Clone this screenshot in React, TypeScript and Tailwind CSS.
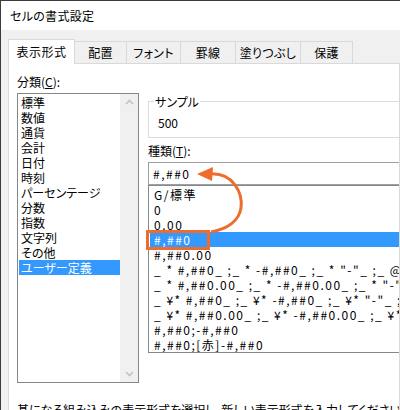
import React from "react";

const categories = ["標準", "数値", "通貨", "会計", "日付", "時刻", "パーセンテージ", "分数", "指数", "文字列", "その他", "ユーザー定義"];

const formats = [
  "G/標準",
  "0",
  "0.00",
  "#,##0",
  "#,##0.00",
  '_ * #,##0_ ;_ * -#,##0_ ;_ * "-"_ ;_ @_ ',
  '_ * #,##0.00_ ;_ * -#,##0.00_ ;_ * "-"??_ ;_ @_ ',
  '_ ¥* #,##0_ ;_ ¥* -#,##0_ ;_ ¥* "-"_ ;_ @_ ',
  '_ ¥* #,##0.00_ ;_ ¥* -#,##0.00_ ;_ ¥* "-"??_ ;_ @_ ',
  "#,##0;-#,##0",
  "#,##0;[赤]-#,##0",
];

const tabs = [
  { label: "配置", w: "w-[53px]" },
  { label: "フォント", w: "w-[55px]" },
  { label: "罫線", w: "w-[56px]" },
  { label: "塗りつぶし", w: "w-[66px]" },
  { label: "保護", w: "w-[53px]" },
];

const font = "font-['Noto_Sans_CJK_JP',sans-serif] [font-feature-settings:'palt']";

/**
 * Excel "セルの書式設定" dialog, 表示形式 tab
 */
export default function App() {
  return (
    <div className={`relative w-[400px] h-[410px] overflow-hidden bg-[#f0f0f0] border-l border-t border-[#3c3c3c] text-[12px] leading-[15px] text-black ${font}`}>
      {/* Title bar */}
      <div className="h-[29px] bg-white flex items-center pl-[9px] text-[12px] tracking-[0.3px]">セルの書式設定</div>

      {/* Tabs */}
      <div className="flex items-end h-[33px] pl-[7px]">
        <div className="relative z-10 w-[67px] h-[25px] mb-[-1px] bg-white border border-b-0 border-[#d9d9d9] flex items-center justify-center pb-[1px] tracking-[0.5px]">
          表示形式
        </div>
        {tabs.map((t) => (
          <div key={t.label} className={`${t.w} h-[22px] -ml-px bg-[#f0f0f0] border border-b-0 border-[#d9d9d9] flex items-center justify-center pb-[1px] tracking-[0.3px]`}>
            {t.label}
          </div>
        ))}
      </div>

      {/* Panel */}
      <div className="ml-[7px] h-[360px] bg-white border border-[#d9d9d9] border-b-0 flex pl-[8px] overflow-hidden">
        {/* Left column */}
        <div className="w-[122px] shrink-0 flex flex-col">
          <div className="mt-[10px]">
            分類(<span className="underline">C</span>):
          </div>
          <div className="mt-[4px] h-[290px] border border-[#828790] flex">
            <div className="flex-1 pt-[1px] pl-px">
              {categories.map((c, i) => (
                <div key={c} className={`h-[15px] pl-[2px] whitespace-nowrap ${i === categories.length - 1 ? "bg-[#3399ff] text-white" : ""}`}>
                  {c}
                </div>
              ))}
            </div>
            <div className="w-[18px] bg-[#f0f0f0] flex flex-col items-center justify-between py-[5px]">
              <svg width="9" height="6" viewBox="0 0 9 6">
                <path d="M1 5 L4.5 1.5 L8 5" fill="none" stroke="#c2c2c2" strokeWidth="1.6" />
              </svg>
              <svg width="9" height="6" viewBox="0 0 9 6">
                <path d="M1 1 L4.5 4.5 L8 1" fill="none" stroke="#c2c2c2" strokeWidth="1.6" />
              </svg>
            </div>
          </div>
          <div className="mt-[19px] whitespace-nowrap">基になる組み込みの表示形式を選択し、新しい表示形式を入力してください。</div>
        </div>

        {/* Right column */}
        <div className="ml-[9px] w-[270px] shrink-0 flex flex-col">
          <div className="relative mt-[37px] h-[37px] border border-[#dcdcdc] pl-[9px] pt-[13px]">
            <span className="absolute -top-[8px] left-[5px] bg-white px-px">サンプル</span>
            <div>500</div>
          </div>
          <div className="mt-[5px]">
            種類(<span className="underline">T</span>):
          </div>
          <div className="mt-[4px] h-[23px] border border-[#a0a0a0] flex items-center pl-[4px] tracking-[1.5px]">#,##0</div>
          <div className="h-[168px] border border-[#828790] pt-[1px] pl-px">
            {formats.map((f, i) => (
              <div key={f} className={`h-[15px] pl-[4px] whitespace-pre tracking-[1.5px] ${i === 3 ? "bg-[#3399ff] text-white" : ""}`}>
                {f}
              </div>
            ))}
          </div>
        </div>
      </div>

      {/* Annotation: highlight box and arrow */}
      <div className="absolute left-[145px] top-[229px] w-[64px] h-[20px] border-[3px] border-[#ee6c2c]" />
      <svg className="absolute left-[140px] top-[160px]" width="110" height="95" viewBox="0 0 110 95">
        <path d="M68 13 C 92 11, 102 32, 100 47 C 98 60, 86 68, 70 71" fill="none" stroke="#ee6c2c" strokeWidth="3" />
        <polygon points="56,13 72,6 71,20" fill="#ee6c2c" />
      </svg>
    </div>
  );
}
